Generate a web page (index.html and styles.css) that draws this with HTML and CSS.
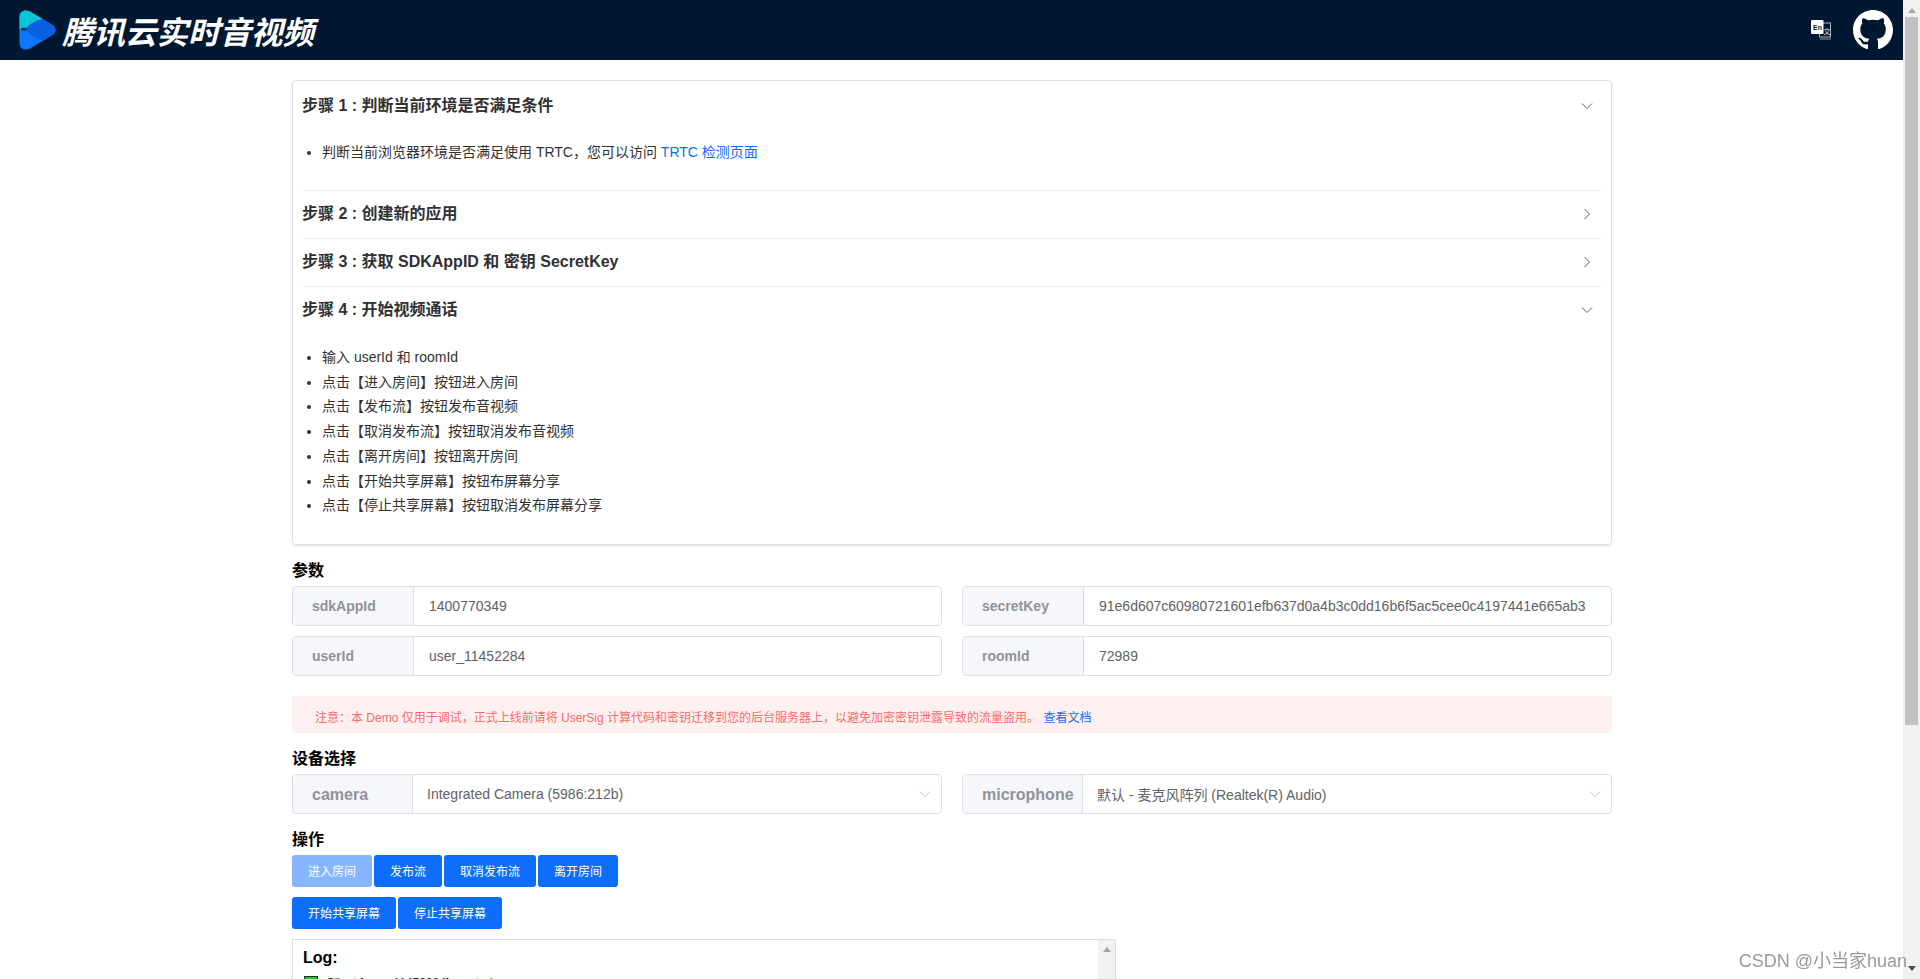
FILE: index.html
```html
<!DOCTYPE html>
<html lang="zh-CN">
<head>
<meta charset="utf-8">
<title>腾讯云实时音视频</title>
<link rel="stylesheet" href="styles.css">
</head>
<body>
<div class="viewport">
  <div class="page">
    <header class="topbar">
      <div class="brand">
        <svg class="logo" viewBox="0 0 37 40" width="37" height="40">
          <path d="M0.500 7C0.500 1 6 -1 11 1.500L33.500 15C37.500 17.500 37.500 22.500 33.500 25L11 38.500C6 41 0.500 39 0.500 33Z" fill="#0a78ff"/>
          <path d="M0.500 7C0.500 1 6 -1 11 1.500L24 9.300C17 10 11 14 6.500 19L0.500 19Z" fill="#0ac6dc"/>
          <path d="M24 9.300L33.500 15C37.500 17.500 37.500 22.500 33.500 25L25 30.200C17 30 11 25 6.500 19C11 14 17 10 24 9.300Z" fill="#0a60e0"/>
          <ellipse cx="5" cy="19" rx="3" ry="1.500" fill="#06304f"/>
        </svg>
        <span class="brand-name">腾讯云实时音视频</span>
      </div>
      <div class="top-icons">
        <svg class="lang" viewBox="0 0 20 20" width="20" height="20">
          <rect x="8.500" y="3" width="11" height="14" fill="none" stroke="#aab2bc" stroke-width="1"/>
          <path d="M9 19H20" stroke="#8f98a3" stroke-width="1"/>
          <rect x="0" y="0" width="12.500" height="14" rx="1" fill="#fff"/>
          <text class="lang-en" x="2" y="9.500">En</text>
          <text class="lang-zh" x="12.500" y="14">文</text>
        </svg>
        <svg class="github" viewBox="0 0 16 16" width="40" height="40">
          <path fill="#fff" d="M8 0C3.580 0 0 3.580 0 8c0 3.540 2.290 6.530 5.470 7.590.4.070.55-.17.55-.38 0-.19-.01-.82-.01-1.490-2.010.37-2.530-.49-2.690-.94-.09-.23-.48-.94-.82-1.130-.28-.15-.68-.52-.01-.53.630-.01 1.080.58 1.230.82.720 1.210 1.870.87 2.330.66.070-.52.280-.87.510-1.070-1.780-.2-3.640-.89-3.640-3.950 0-.87.310-1.590.82-2.150-.08-.2-.36-1.020.08-2.120 0 0 .67-.21 2.200.82.640-.18 1.320-.27 2-.27s1.360.09 2 .27c1.530-1.040 2.200-.82 2.200-.82.44 1.100.16 1.920.08 2.120.51.560.82 1.270.82 2.150 0 3.070-1.870 3.750-3.650 3.950.29.250.54.730.54 1.480 0 1.070-.01 1.930-.01 2.200 0 .21.150.46.550.38A8.013 8.013 0 0 0 16 8c0-4.420-3.580-8-8-8z"/>
        </svg>
      </div>
    </header>

    <main class="content">
      <section class="steps">
        <div class="step">
          <div class="step-head"><h3>步骤 1 : 判断当前环境是否满足条件</h3>
            <svg class="chev" viewBox="0 0 12 12" width="12" height="12"><path d="M1 3.500L6 8.500L11 3.500"/></svg></div>
          <ul class="step-body first-body">
            <li>判断当前浏览器环境是否满足使用 TRTC，您可以访问 <a href="#">TRTC 检测页面</a></li>
          </ul>
        </div>
        <div class="step">
          <div class="step-head"><h3>步骤 2 : 创建新的应用</h3>
            <svg class="chev" viewBox="0 0 12 12" width="12" height="12"><path d="M3.500 1L8.500 6L3.500 11"/></svg></div>
        </div>
        <div class="step">
          <div class="step-head"><h3>步骤 3 : 获取 SDKAppID 和 密钥 SecretKey</h3>
            <svg class="chev" viewBox="0 0 12 12" width="12" height="12"><path d="M3.500 1L8.500 6L3.500 11"/></svg></div>
        </div>
        <div class="step last">
          <div class="step-head"><h3>步骤 4 : 开始视频通话</h3>
            <svg class="chev" viewBox="0 0 12 12" width="12" height="12"><path d="M1 3.500L6 8.500L11 3.500"/></svg></div>
          <ul class="step-body">
            <li>输入 userId 和 roomId</li>
            <li>点击【进入房间】按钮进入房间</li>
            <li>点击【发布流】按钮发布音视频</li>
            <li>点击【取消发布流】按钮取消发布音视频</li>
            <li>点击【离开房间】按钮离开房间</li>
            <li>点击【开始共享屏幕】按钮布屏幕分享</li>
            <li>点击【停止共享屏幕】按钮取消发布屏幕分享</li>
          </ul>
        </div>
      </section>

      <h2 class="section-title params-title">参数</h2>
      <div class="field-grid">
        <div class="field"><label>sdkAppId</label><span class="value">1400770349</span></div>
        <div class="field"><label>secretKey</label><span class="value">91e6d607c60980721601efb637d0a4b3c0dd16b6f5ac5cee0c4197441e665ab3</span></div>
        <div class="field"><label>userId</label><span class="value">user_11452284</span></div>
        <div class="field"><label>roomId</label><span class="value">72989</span></div>
      </div>

      <div class="notice">注意：本 Demo 仅用于调试，正式上线前请将 UserSig 计算代码和密钥迁移到您的后台服务器上，以避免加密密钥泄露导致的流量盗用。 <a href="#">查看文档</a></div>

      <h2 class="section-title device-title">设备选择</h2>
      <div class="field-grid">
        <div class="field select"><label>camera</label><span class="value">Integrated Camera (5986:212b)</span>
          <svg class="select-arrow" viewBox="0 0 12 12" width="12" height="12"><path d="M1 3.500L6 8.500L11 3.500"/></svg></div>
        <div class="field select"><label>microphone</label><span class="value">默认 - 麦克风阵列 (Realtek(R) Audio)</span>
          <svg class="select-arrow" viewBox="0 0 12 12" width="12" height="12"><path d="M1 3.500L6 8.500L11 3.500"/></svg></div>
      </div>

      <h2 class="section-title ops-title">操作</h2>
      <div class="btn-row">
        <button class="btn disabled">进入房间</button>
        <button class="btn">发布流</button>
        <button class="btn">取消发布流</button>
        <button class="btn">离开房间</button>
      </div>
      <div class="btn-row second">
        <button class="btn">开始共享屏幕</button>
        <button class="btn">停止共享屏幕</button>
      </div>

      <section class="log">
        <div class="log-main">
          <h4>Log:</h4>
          <div class="log-line"><i class="dot"></i><span>Client [user_11452284] created.</span></div>
        </div>
        <div class="mini-scroll"><span class="up"></span></div>
      </section>
    </main>
  </div>
  <div class="scrollbar">
    <span class="arrow up"></span>
    <span class="thumb"></span>
    <span class="arrow down"></span>
  </div>
</div>
<div class="watermark">CSDN @小当家huan</div>
</body>
</html>
```
FILE: styles.css
```css
* { box-sizing: border-box; }
html, body { margin: 0; height: 100%; overflow: hidden; }
body {
  font-family: "Liberation Sans", "Noto Sans CJK SC", sans-serif;
  color: #212529;
  background: #fff;
  font-size: 14px;
}
.viewport { display: flex; height: 979px; overflow: hidden; }
.page { flex: 1; min-width: 0; overflow: hidden; }

.topbar {
  height: 60px;
  background: #001731;
  display: flex;
  align-items: center;
  justify-content: space-between;
  padding: 0 10px 0 19px;
}
.brand { display: flex; align-items: center; gap: 6px; }
.logo { display: block; }
.brand-name {
  font-family: "Noto Sans CJK SC", sans-serif;
  font-size: 31.500px;
  font-weight: 700;
  font-style: italic;
  color: #fff;
  line-height: 42px;
  white-space: nowrap;
}
.top-icons { display: flex; align-items: center; gap: 22px; }
.top-icons svg { display: block; }
.lang-en { font: 700 7px "Liberation Sans", sans-serif; fill: #001731; }
.lang-zh { font: 400 7px "Noto Sans CJK SC", sans-serif; fill: #dfe3e8; }

.content { width: 1320px; margin: 20px 0 0 292px; }

.steps {
  border: 1px solid #dcdfe6;
  border-radius: 4px;
  box-shadow: 0 1px 2px rgba(0, 0, 0, .12);
  height: 465px;
  padding: 1px 10px 0 9px;
}
.step { border-bottom: 1px solid #ebeef5; }
.step.last { border-bottom: 0; }
.step-head {
  height: 47px;
  display: flex;
  align-items: center;
  justify-content: space-between;
  padding-right: 8px;
}
.step + .step .step-head { padding-bottom: 2px; }
.step-head h3 { margin: 0; font-size: 16px; font-weight: 700; color: #303133; line-height: 45px; }
.chev { display: block; fill: none; stroke: #565c66; stroke-width: 1; }
.step-body {
  margin: 0;
  padding: 11px 0 19px 20px;
  font-size: 14px;
  line-height: 24.700px;
  color: #303133;
}
.first-body { padding: 11px 0 25.300px 20px; }
.step-body a { color: #0d6efd; text-decoration: none; }

.section-title { margin: 0; font-size: 16px; font-weight: 700; color: #000; line-height: 24px; }
.params-title { margin-top: 14px; }
.device-title { margin-top: 14px; }
.ops-title { margin-top: 14px; }

.field-grid { display: grid; grid-template-columns: 650px 650px; column-gap: 20px; row-gap: 10px; margin-top: 3px; }
.field {
  position: relative;
  display: flex;
  height: 40px;
  border: 1px solid #dcdfe6;
  border-radius: 4px;
  font-size: 14px;
}
.field label {
  flex: 0 0 121px;
  display: flex;
  align-items: center;
  padding-left: 19px;
  background: #f5f7fa;
  border-right: 1px solid #dcdfe6;
  color: #909399;
  font-weight: 700;
  border-radius: 3px 0 0 3px;
}
.value { display: flex; align-items: center; padding-left: 15px; color: #606266; white-space: nowrap; }
.select label { flex-basis: 120px; font-size: 16px; padding-top: 1px; }
.select .value { padding-left: 14px; }
.select-arrow {
  position: absolute;
  right: 10px;
  top: 13px;
  fill: none;
  stroke: #c0c4cc;
  stroke-width: 1;
}

.notice {
  margin-top: 20px;
  height: 37px;
  background: #fef0f0;
  border-radius: 4px;
  padding: 8px 0 0 23px;
  font-size: 12px;
  line-height: 29px;
  color: #f56c6c;
}
.notice a { color: #0d6efd; text-decoration: none; margin-left: 1px; }

.btn-row { display: flex; gap: 2px; margin-top: 3px; }
.btn-row.second { margin-top: 10px; }
.btn {
  height: 32px;
  padding: 0 16px 2px;
  border: 0;
  border-radius: 3px;
  background: #0d6efd;
  color: #fff;
  font: 400 12px "Liberation Sans", "Noto Sans CJK SC", sans-serif;
}
.btn.disabled { background: #86b7fe; }

.log {
  margin-top: 10px;
  width: 824px;
  height: 60px;
  border: 1px solid #dfdfdf;
  border-bottom: 0;
  display: flex;
  overflow: hidden;
}
.log-main { flex: 1; padding: 8px 10px; }
.log-main h4 { margin: 0; font-size: 16px; font-weight: 700; line-height: 20px; color: #000; }
.log-line { display: flex; align-items: center; gap: 8px; margin-top: 8px; font-size: 12px; height: 14px; }
.dot { width: 14px; height: 14px; margin-left: 1px; background: #1ac71a; border: 1px solid #2a2a2a; flex: none; }
.mini-scroll { flex: 0 0 17px; background: #f1f1f1; display: flex; justify-content: center; align-items: flex-start; padding-top: 7px; }
.mini-scroll .up { width: 0; height: 0; border: 4px solid transparent; border-top: 0; border-bottom: 5px solid #a3a3a3; }

.scrollbar { flex: 0 0 17px; background: #f1f1f1; display: flex; flex-direction: column; align-items: center; position: relative; }
.arrow { width: 0; height: 0; flex: none; }
.arrow.up { margin-top: 8px; border: 4px solid transparent; border-top: 0; border-bottom: 5px solid #a3a3a3; }
.thumb { margin-top: 4px; width: 13px; height: 708px; background: #c1c1c1; flex: none; }
.arrow.down { position: absolute; bottom: 8px; border: 4px solid transparent; border-bottom: 0; border-top: 5px solid #505050; }

.watermark {
  position: fixed;
  right: 13px;
  bottom: 7px;
  font-family: "Liberation Sans", "Noto Sans CJK SC", sans-serif;
  font-size: 18px;
  color: #9a9a9a;
  white-space: nowrap;
}
```
